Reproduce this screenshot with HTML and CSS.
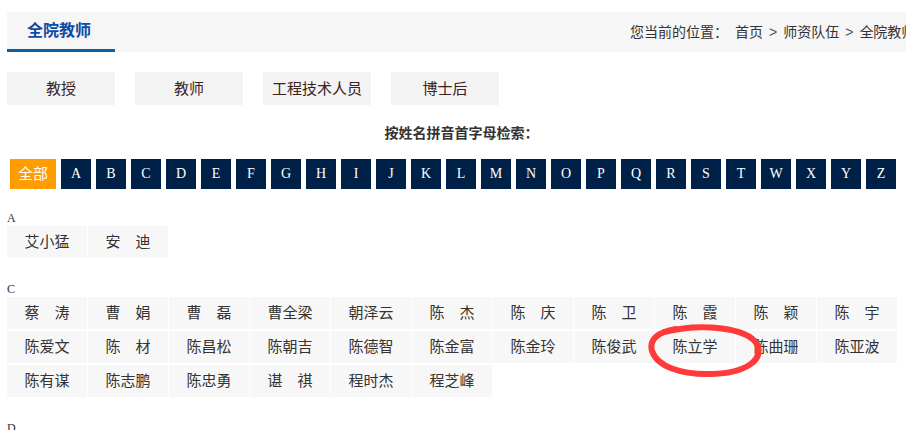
FILE: index.html
```html
<!DOCTYPE html>
<html lang="zh-CN">
<head>
  <meta charset="UTF-8" />
  <title>全院教师</title>
  <link rel="stylesheet" href="styles.css">
</head>
<body>
<div class="page">

  <div class="topbar">
    <div class="tab">全院教师</div>
    <div class="crumb">您当前的位置：<span class="home">首页</span><span class="sep">&gt;</span>师资队伍<span class="sep">&gt;</span>全院教师</div>
  </div>

  <div class="cats">
    <a class="cat">教授</a>
    <a class="cat">教师</a>
    <a class="cat">工程技术人员</a>
    <a class="cat">博士后</a>
  </div>

  <h3 class="search-title">按姓名拼音首字母检索：</h3>

  <div class="letters">
    <a class="letter all">全部</a>
    <a class="letter">A</a><a class="letter">B</a><a class="letter">C</a><a class="letter">D</a>
    <a class="letter">E</a><a class="letter">F</a><a class="letter">G</a><a class="letter">H</a>
    <a class="letter">I</a><a class="letter">J</a><a class="letter">K</a><a class="letter">L</a>
    <a class="letter">M</a><a class="letter">N</a><a class="letter">O</a><a class="letter">P</a>
    <a class="letter">Q</a><a class="letter">R</a><a class="letter">S</a><a class="letter">T</a>
    <a class="letter">W</a><a class="letter">X</a><a class="letter">Y</a><a class="letter">Z</a>
  </div>

  <div class="group">
    <div class="label">A</div>
    <ul class="names">
      <li>艾小猛</li>
      <li>安　迪</li>
    </ul>
  </div>

  <div class="group">
    <div class="label">C</div>
    <ul class="names">
      <li>蔡　涛</li>
      <li>曹　娟</li>
      <li>曹　磊</li>
      <li>曹全梁</li>
      <li>朝泽云</li>
      <li>陈　杰</li>
      <li>陈　庆</li>
      <li>陈　卫</li>
      <li>陈　霞</li>
      <li>陈　颖</li>
      <li>陈　宇</li>
      <li>陈爱文</li>
      <li>陈　材</li>
      <li>陈昌松</li>
      <li>陈朝吉</li>
      <li>陈德智</li>
      <li>陈金富</li>
      <li>陈金玲</li>
      <li>陈俊武</li>
      <li>陈立学</li>
      <li>陈曲珊</li>
      <li>陈亚波</li>
      <li>陈有谋</li>
      <li>陈志鹏</li>
      <li>陈忠勇</li>
      <li>谌　祺</li>
      <li>程时杰</li>
      <li>程芝峰</li>
    </ul>
  </div>

  <div class="group">
    <div class="label">D</div>
  </div>

  <!-- hand-drawn mark on top of the list -->
  <svg class="mark" width="906" height="430" viewBox="0 0 906 430">
    <path d="M 664 332 C 700 323, 746 327, 757 344 C 764 360, 746 373, 712 374 C 680 375, 657 366, 652 351 C 649 340, 657 332, 676 329"
          fill="none" stroke="#ff3a3a" stroke-width="6" stroke-linecap="round" stroke-linejoin="round"/>
  </svg>

</div>
</body>
</html>
```

FILE: styles.css
```css
html, body {
  margin: 0;
  overflow: hidden;
}

body {
  font-family: "Liberation Sans", "Noto Sans CJK SC", sans-serif;
  color: #333;
  background: #fff;
}

.page {
  position: relative;
  width: 909px;
  padding: 12px 0 0 7px;
}

.topbar {
  display: flex;
  height: 40px;
  background: #f6f6f6;
  white-space: nowrap;
  overflow: hidden;
}

.tab {
  flex-shrink: 0;
  box-sizing: border-box;
  width: 108px;
  height: 40px;
  padding-left: 20px;
  line-height: 38px;
  font-size: 16px;
  font-weight: bold;
  color: #0d4ca6;
  border-bottom: 3px solid #0b5fa5;
}

.crumb {
  flex-shrink: 0;
  margin-left: 515px;
  line-height: 40px;
  font-size: 14px;
  color: #333;
}

.crumb .home {
  margin-left: 7px;
}

.crumb .sep {
  padding: 0 6px;
  color: #555;
}

.cats {
  display: flex;
  gap: 20px;
  margin-top: 20px;
}

.cat {
  width: 108px;
  height: 33px;
  line-height: 33px;
  text-align: center;
  font-size: 15px;
  color: #3a2222;
  background: #f3f3f3;
}

.search-title {
  margin: 20px 0 0;
  height: 16px;
  line-height: 16px;
  text-align: center;
  font-size: 14px;
  font-weight: bold;
  color: #333;
}

.letters {
  display: flex;
  gap: 5px;
  margin-top: 18px;
  padding-left: 3px;
}

.letter {
  width: 30px;
  height: 30px;
  line-height: 30px;
  text-align: center;
  font-family: "Liberation Serif", serif;
  font-size: 14px;
  color: #fff;
  background: #002147;
}

.letter.all {
  width: 46px;
  font-family: "Liberation Sans", "Noto Sans CJK SC", sans-serif;
  font-size: 15px;
  background: #ff9c00;
}

.group {
  margin-top: 22px;
}

.label {
  height: 15px;
  line-height: 15px;
  font-family: "Liberation Serif", serif;
  font-size: 12px;
  color: #333;
}

.names {
  display: flex;
  flex-wrap: wrap;
  list-style: none;
  margin: 0;
  padding: 0;
}

.names li {
  width: 80px;
  height: 32px;
  margin: 0 1px 2px 0;
  line-height: 32px;
  text-align: center;
  font-size: 15px;
  color: #333;
  background: #f7f7f7;
}

.mark {
  position: absolute;
  top: 0;
  left: 0;
  pointer-events: none;
}
```
